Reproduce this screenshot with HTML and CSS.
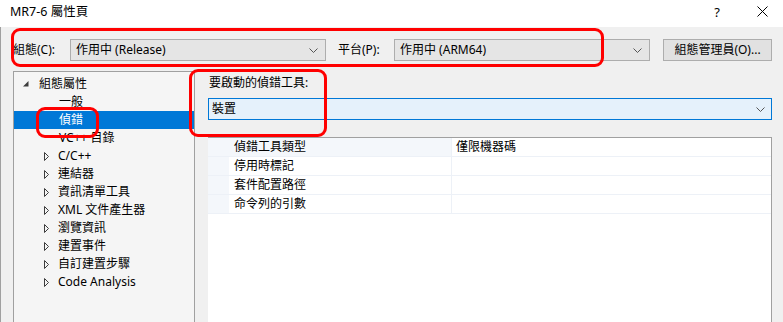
FILE: index.html
```html
<!DOCTYPE html>
<html lang="zh-Hant">
<head>
<meta charset="utf-8">
<title>MR7-6 屬性頁</title>
<link rel="stylesheet" href="styles.css">
</head>
<body>
<div class="titlebar">
  <span class="title">MR7-6 屬性頁</span>
  <span class="help">?</span>
  <span class="close"><svg width="11" height="11" viewBox="0 0 11 11"><path d="M0.5 0.5 L10.5 10.5 M10.5 0.5 L0.5 10.5" stroke="#000" stroke-width="1" fill="none"/></svg></span>
</div>
<div class="window">
  <div class="toprow">
    <span class="lbl lbl-cfg">組態(C):</span>
    <div class="combo combo-gray w256"><span>作用中 (Release)</span><svg class="chev" width="9" height="5" viewBox="0 0 9 5"><path d="M0.5 0.5 L4.5 4.5 L8.5 0.5" stroke="#555" fill="none"/></svg></div>
    <span class="lbl lbl-plat">平台(P):</span>
    <div class="combo combo-gray w256"><span>作用中 (ARM64)</span><svg class="chev" width="9" height="5" viewBox="0 0 9 5"><path d="M0.5 0.5 L4.5 4.5 L8.5 0.5" stroke="#555" fill="none"/></svg></div>
    <button class="btn">組態管理員(O)...</button>
  </div>
  <div class="main">
    <div class="tree">
      <div class="trow l0"><span class="tg"><svg width="6" height="6" viewBox="0 0 6 6"><path d="M5.5 0 L5.5 5.5 L0 5.5 Z" fill="#3c3c3c"/></svg></span>組態屬性</div>
      <div class="trow leaf">一般</div>
      <div class="trow leaf sel">偵錯</div>
      <div class="trow leaf">VC++ 目錄</div>
      <div class="trow l1"><span class="tg"><svg width="6" height="9" viewBox="0 0 6 9"><path d="M0.5 0.5 L4.5 4.5 L0.5 8.5 Z" stroke="#3c3c3c" fill="none"/></svg></span>C/C++</div>
      <div class="trow l1"><span class="tg"><svg width="6" height="9" viewBox="0 0 6 9"><path d="M0.5 0.5 L4.5 4.5 L0.5 8.5 Z" stroke="#3c3c3c" fill="none"/></svg></span>連結器</div>
      <div class="trow l1"><span class="tg"><svg width="6" height="9" viewBox="0 0 6 9"><path d="M0.5 0.5 L4.5 4.5 L0.5 8.5 Z" stroke="#3c3c3c" fill="none"/></svg></span>資訊清單工具</div>
      <div class="trow l1"><span class="tg"><svg width="6" height="9" viewBox="0 0 6 9"><path d="M0.5 0.5 L4.5 4.5 L0.5 8.5 Z" stroke="#3c3c3c" fill="none"/></svg></span>XML 文件產生器</div>
      <div class="trow l1"><span class="tg"><svg width="6" height="9" viewBox="0 0 6 9"><path d="M0.5 0.5 L4.5 4.5 L0.5 8.5 Z" stroke="#3c3c3c" fill="none"/></svg></span>瀏覽資訊</div>
      <div class="trow l1"><span class="tg"><svg width="6" height="9" viewBox="0 0 6 9"><path d="M0.5 0.5 L4.5 4.5 L0.5 8.5 Z" stroke="#3c3c3c" fill="none"/></svg></span>建置事件</div>
      <div class="trow l1"><span class="tg"><svg width="6" height="9" viewBox="0 0 6 9"><path d="M0.5 0.5 L4.5 4.5 L0.5 8.5 Z" stroke="#3c3c3c" fill="none"/></svg></span>自訂建置步驟</div>
      <div class="trow l1"><span class="tg"><svg width="6" height="9" viewBox="0 0 6 9"><path d="M0.5 0.5 L4.5 4.5 L0.5 8.5 Z" stroke="#3c3c3c" fill="none"/></svg></span>Code Analysis</div>
    </div>
    <div class="panel">
      <div class="plabel">要啟動的偵錯工具:</div>
      <div class="combo combo-blue"><span>裝置</span><svg class="chev" width="9" height="5" viewBox="0 0 9 5"><path d="M0.5 0.5 L4.5 4.5 L8.5 0.5" stroke="#555" fill="none"/></svg></div>
      <div class="grid">
        <div class="grow first"><span class="gut"></span><span class="name">偵錯工具類型</span><span class="val">僅限機器碼</span></div>
        <div class="grow"><span class="gut"></span><span class="name">停用時標記</span><span class="val"></span></div>
        <div class="grow"><span class="gut"></span><span class="name">套件配置路徑</span><span class="val"></span></div>
        <div class="grow"><span class="gut"></span><span class="name">命令列的引數</span><span class="val"></span></div>
      </div>
    </div>
  </div>
</div>
<div class="mark mark1"></div>
<div class="mark mark2"></div>
<div class="mark mark3"></div>
</body>
</html>
```

FILE: styles.css
```css
html, body {
  margin: 0;
  padding: 0;
}
body {
  width: 783px;
  height: 322px;
  overflow: hidden;
  position: relative;
  background: #f0f0f0;
  font-family: "Noto Sans", "Noto Sans CJK TC", sans-serif;
  font-size: 12px;
  color: #000;
}
.titlebar {
  height: 27px;
  background: #fff;
  display: flex;
  align-items: center;
  padding-left: 10px;
  box-sizing: border-box;
}
.title {
  font-size: 12.5px;
  line-height: 16px;
  margin-top: -3px;
}
.help {
  margin-left: auto;
  width: 12px;
  text-align: center;
  font-size: 13px;
  margin-top: -3px;
}
.close {
  width: 11px;
  height: 11px;
  margin-left: 34px;
  margin-right: 15px;
  margin-top: -4px;
  display: flex;
}
.window {
  height: 295px;
  border-left: 1px solid #a0a0a0;
  padding: 12px 11px 0 12px;
  box-sizing: border-box;
  display: flex;
  flex-direction: column;
}
.toprow {
  display: flex;
  align-items: center;
  height: 22px;
}
.lbl {
  line-height: 16px;
}
.lbl-cfg { width: 57px; }
.lbl-plat { width: 56px; margin-left: 12px; }
.combo {
  height: 22px;
  box-sizing: border-box;
  display: flex;
  align-items: center;
  padding-left: 5px;
  padding-right: 7px;
  line-height: 16px;
}
.combo span { flex: 1; }
.combo-gray {
  background: #e5e5e5;
  border: 1px solid #adadad;
}
.w256 { width: 256px; }
.chev { flex: none; }
.btn {
  margin-left: 13px;
  width: 109px;
  height: 22px;
  box-sizing: border-box;
  background: #e1e1e1;
  border: 1px solid #adadad;
  font: inherit;
  color: #000;
  padding: 0;
  line-height: 16px;
}
.main {
  display: flex;
  margin-top: 10px;
  flex: 1;
  min-height: 0;
}
.tree {
  width: 182px;
  box-sizing: border-box;
  background: #f5f5f5;
  border: 1px solid #a0a0a0;
  border-bottom: none;
  padding-top: 3px;
  flex: none;
}
.trow {
  height: 18px;
  line-height: 18px;
  display: flex;
  align-items: center;
  white-space: nowrap;
}
.tg {
  display: flex;
  align-items: center;
  flex: none;
}
.l0 { padding-left: 9px; }
.l0 .tg { width: 16px; }
.l1 { padding-left: 30px; }
.l1 .tg { width: 14px; }
.leaf { padding-left: 45px; }
.sel {
  background: #0078d7;
  color: #fff;
}
.panel {
  flex: 1;
  margin-left: 13px;
  display: flex;
  flex-direction: column;
  min-width: 0;
}
.plabel {
  margin-top: 4px;
  line-height: 16px;
  padding-left: 1px;
}
.combo-blue {
  margin-top: 7px;
  background: #e5f1fb;
  border: 1px solid #0078d7;
  padding-left: 3px;
  padding-right: 6px;
}
.grid {
  margin-top: 17px;
  flex: 1;
  background: #fff;
  border-top: 1px solid #a0a0a0;
  border-right: 1px solid #a0a0a0;
}
.grow {
  display: grid;
  grid-template-columns: 21px 222px 1fr;
  height: 19px;
  box-sizing: border-box;
  border-bottom: 1px solid #edf1f7;
  line-height: 18px;
}
.gut { background: #f4f7fb; }
.name { padding-left: 5px; }
.first .name { background: #f4f7fb; }
.val {
  border-left: 1px solid #edf1f7;
  padding-left: 4px;
}
.mark {
  position: absolute;
  border: 3px solid #ff0000;
  border-radius: 9px;
  box-sizing: border-box;
}
.mark1 { left: 11px; top: 28px; width: 593px; height: 39px; }
.mark2 { left: 36px; top: 107px; width: 63px; height: 31px; }
.mark3 { left: 189px; top: 69px; width: 138px; height: 68px; }
```
